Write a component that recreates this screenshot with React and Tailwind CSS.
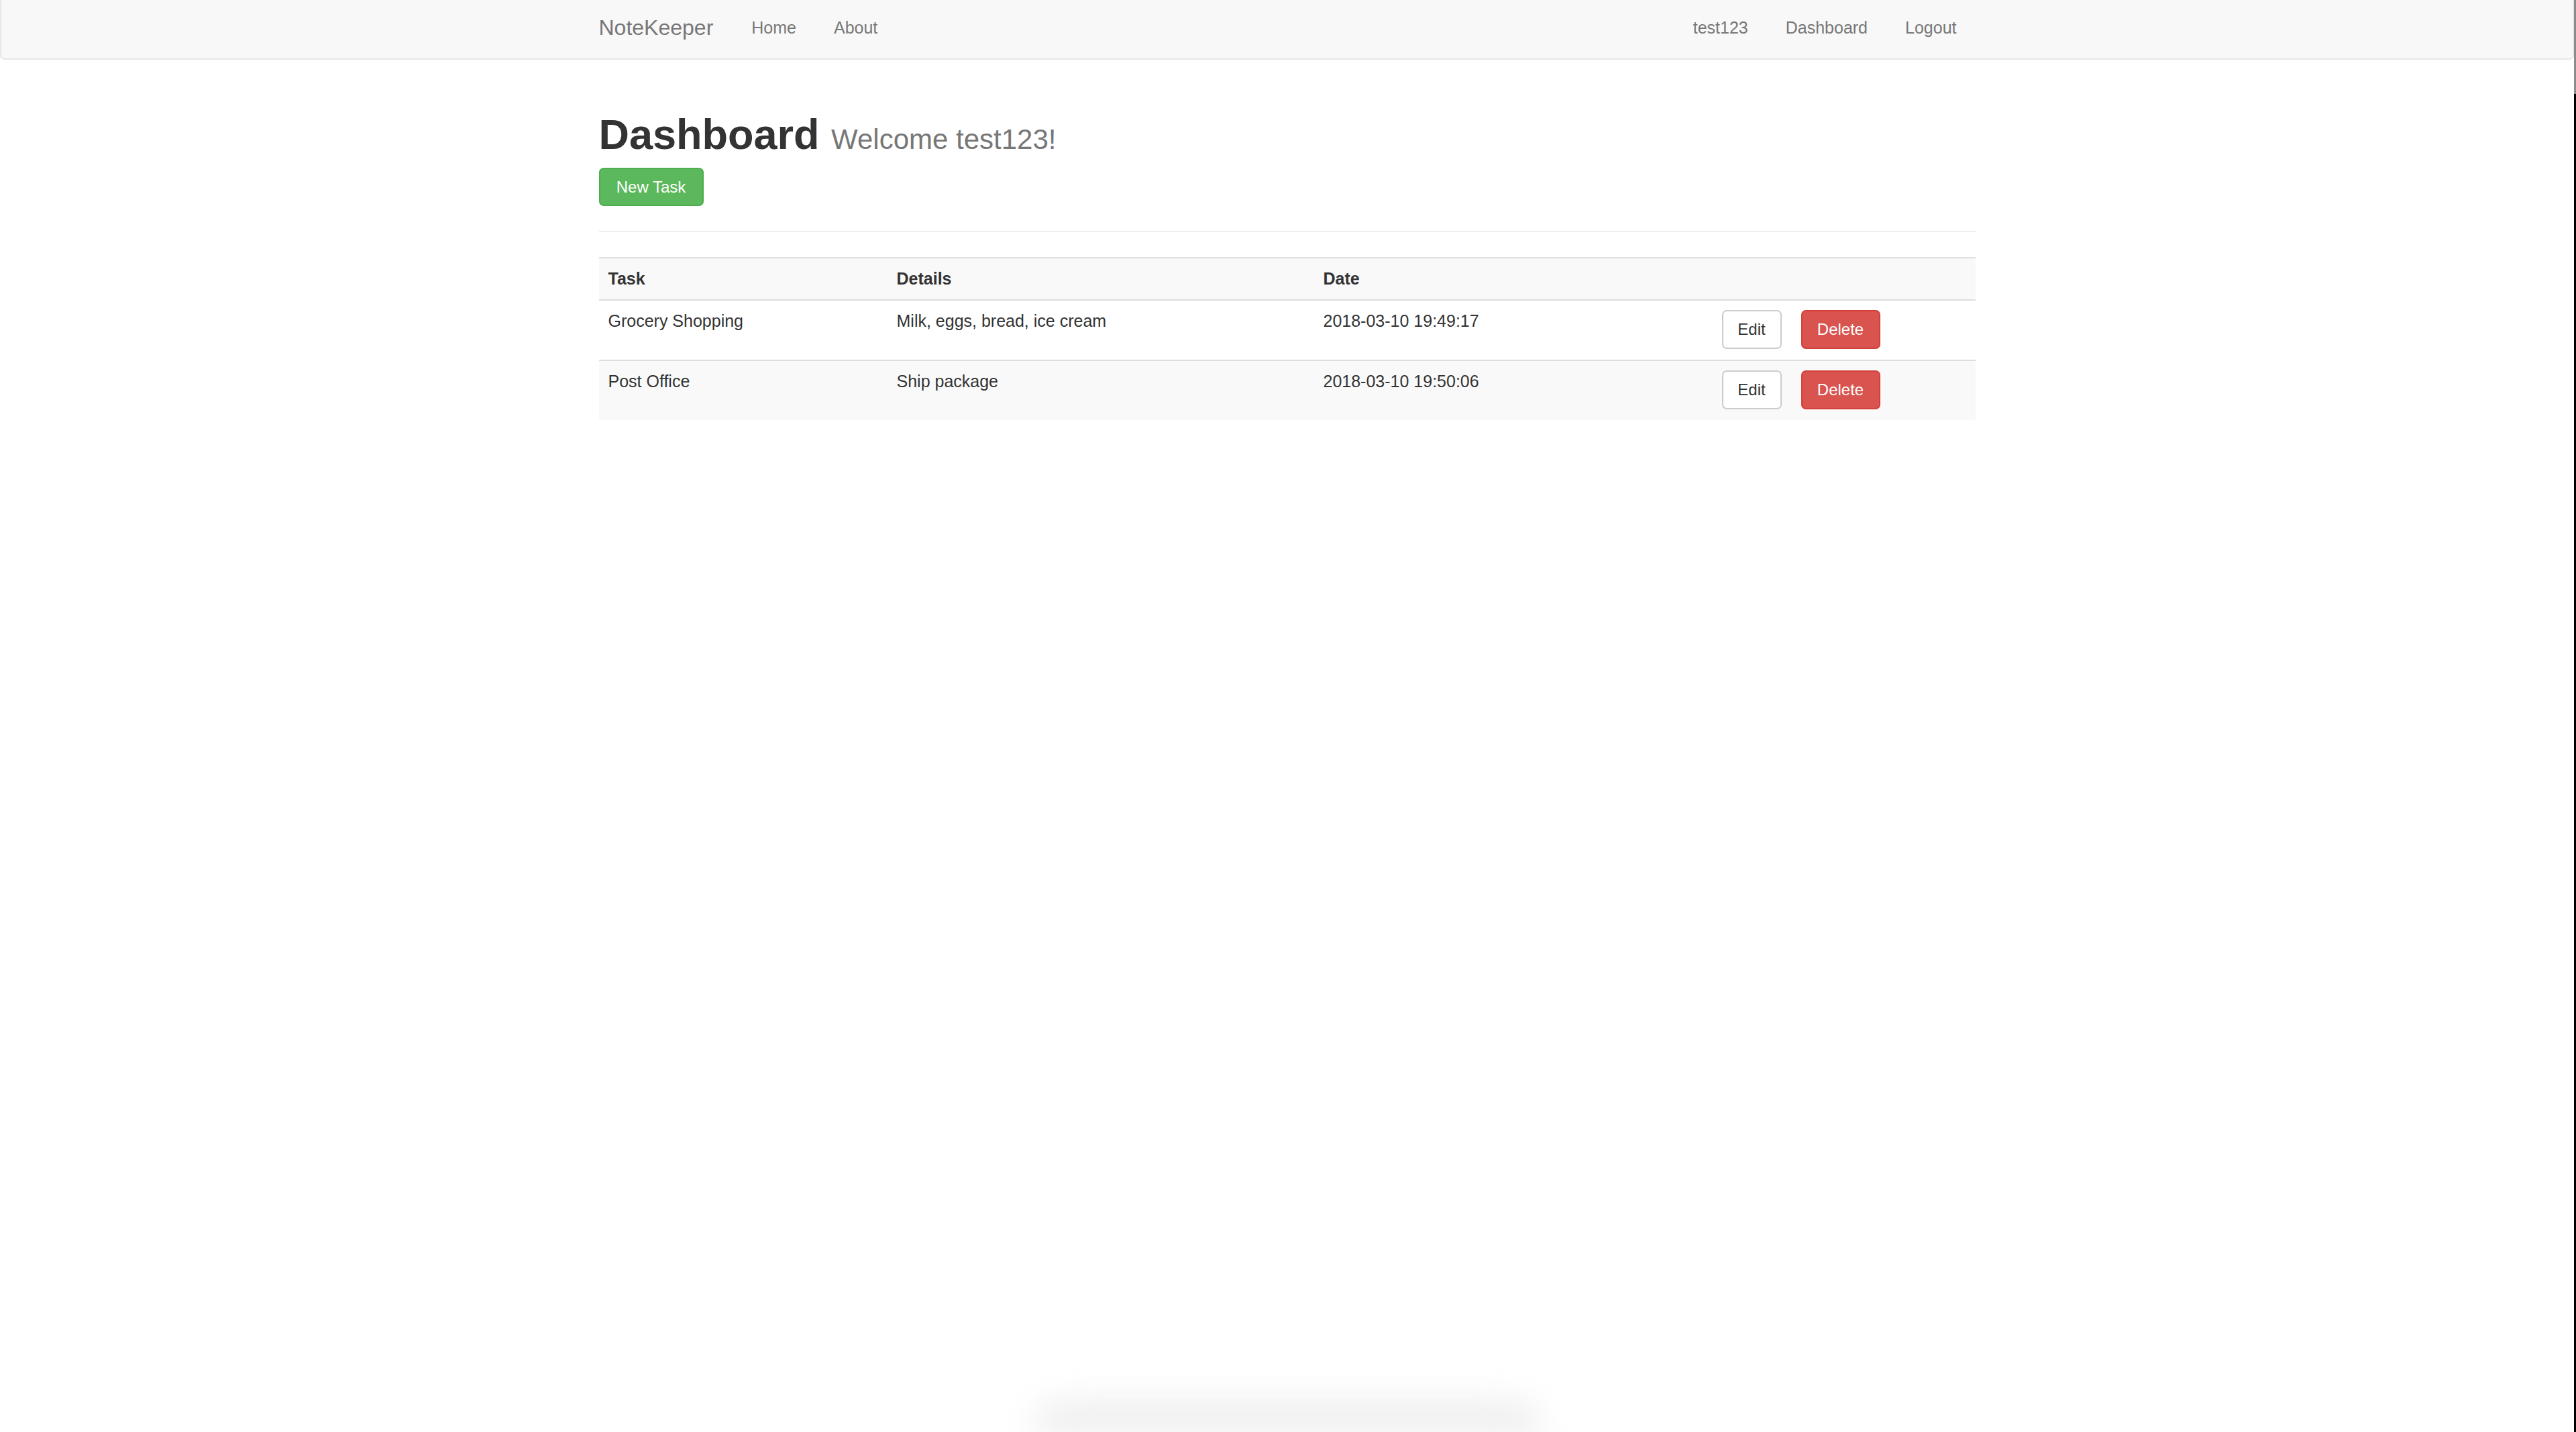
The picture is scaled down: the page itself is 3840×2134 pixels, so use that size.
import React from 'react';

const tasks = [
  { id: 1, title: 'Grocery Shopping', details: 'Milk, eggs, bread, ice cream', date: '2018-03-10 19:49:17' },
  { id: 2, title: 'Post Office', details: 'Ship package', date: '2018-03-10 19:50:06' }
];

const NavLink = ({ children }) => (
  <a href="#" className="px-[28px] text-[25px] leading-[36px] text-[#777] hover:text-[#333]">
    {children}
  </a>
);

const Navbar = () => (
  <nav className="h-[89px] bg-[#f8f8f8] border-x-2 border-b-2 border-[#e7e7e7] rounded-b-[7px]">
    <div className="w-[2052px] mx-auto flex items-start justify-between pt-[23px]">
      <div className="flex items-start">
        <a href="#" className="mr-[29px] text-[32px] leading-[36px] text-[#777]">NoteKeeper</a>
        <NavLink>Home</NavLink>
        <NavLink>About</NavLink>
      </div>
      <div className="flex items-start">
        <NavLink>test123</NavLink>
        <NavLink>Dashboard</NavLink>
        <NavLink>Logout</NavLink>
      </div>
    </div>
  </nav>
);

const TaskRow = ({ task, striped }) => (
  <tr className={`border-t-2 border-[#ddd] ${striped ? 'bg-[#f9f9f9]' : 'bg-white'}`}>
    <td className="px-[14px] pt-[14px] align-top leading-[33px]">{task.title}</td>
    <td className="px-[14px] pt-[14px] align-top leading-[33px]">{task.details}</td>
    <td className="px-[14px] pt-[14px] align-top leading-[33px]">{task.date}</td>
    <td className="px-[14px] pt-[14px] pb-[16px] align-top">
      <div className="flex gap-[29px]">
        <button className="h-[58px] w-[89px] flex items-center justify-center bg-white border-2 border-[#ccc] rounded-[7px] text-[24px] text-[#333]">
          Edit
        </button>
        <button className="h-[58px] w-[118px] flex items-center justify-center bg-[#d9534f] border-2 border-[#d43f3a] rounded-[7px] text-[24px] text-white">
          Delete
        </button>
      </div>
    </td>
  </tr>
);

const App = () => {
  return (
    <div className="h-screen overflow-hidden flex bg-white font-['Liberation_Sans',Arial,sans-serif] text-[#333]">
      <div className="flex-1 flex flex-col">
        <Navbar />

        {/* Page content */}
        <main className="w-[2052px] mx-auto pt-[77px]">
          <h1 className="text-[63px] leading-[69px] font-bold text-[#333]">
            Dashboard <small className="text-[42px] leading-none font-normal text-[#777]">Welcome test123!</small>
          </h1>
          <button className="mt-[15px] h-[57px] w-[156px] flex items-center justify-center bg-[#5cb85c] border-2 border-[#4cae4c] rounded-[7px] text-[24px] text-white">
            New Task
          </button>
          <hr className="mt-[37px] border-t-2 border-[#eee]" />

          <table className="mt-[37px] w-full border-collapse text-[25px] text-left">
            <thead>
              <tr className="border-t-2 border-b-2 border-[#ddd] bg-[#f9f9f9]">
                <th className="w-[430px] px-[14px] py-[14px] leading-[33px] font-bold">Task</th>
                <th className="w-[636px] px-[14px] py-[14px] leading-[33px] font-bold">Details</th>
                <th className="w-[594px] px-[14px] py-[14px] leading-[33px] font-bold">Date</th>
                <th className="px-[14px] py-[14px]"></th>
              </tr>
            </thead>
            <tbody>
              {tasks.map((task, i) => (
                <TaskRow key={task.id} task={task} striped={i % 2 === 1} />
              ))}
            </tbody>
          </table>
        </main>

        {/* faint shadow at the bottom edge */}
        <div className="mt-auto mx-auto h-[50px] w-[760px] bg-gradient-to-b from-[#f4f4f4] to-[#e8e8e8] rounded-t-[60px] blur-[24px]" />
      </div>

      {/* window edge */}
      <div className="w-[3px] flex flex-col">
        <div className="h-[140px] bg-[#8c8c8c]" />
        <div className="flex-1 bg-black" />
      </div>
    </div>
  );
};

export default App;
